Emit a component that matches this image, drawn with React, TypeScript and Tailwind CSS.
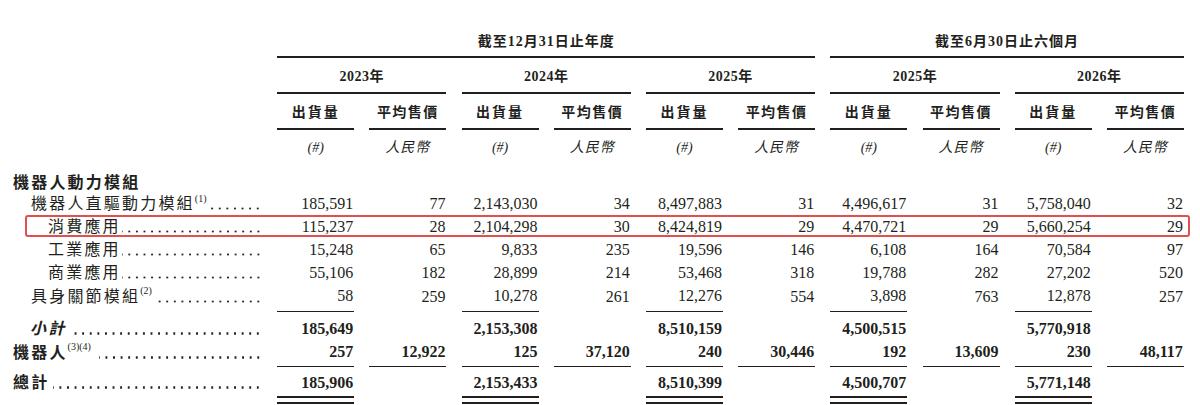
import React from "react";

const G = "grid grid-cols-[262px_repeat(10,77px)] gap-x-[15.2px]";
const LINE = "border-[#231f20]";

type Row = {
  label: string;
  sup?: string;
  indent: number;
  vals: string[];
};

const body: Row[] = [
  { label: "機器人直驅動力模組", sup: "(1)", indent: 31, vals: ["185,591", "77", "2,143,030", "34", "8,497,883", "31", "4,496,617", "31", "5,758,040", "32"] },
  { label: "消費應用", indent: 48, vals: ["115,237", "28", "2,104,298", "30", "8,424,819", "29", "4,470,721", "29", "5,660,254", "29"] },
  { label: "工業應用", indent: 48, vals: ["15,248", "65", "9,833", "235", "19,596", "146", "6,108", "164", "70,584", "97"] },
  { label: "商業應用", indent: 48, vals: ["55,106", "182", "28,899", "214", "53,468", "318", "19,788", "282", "27,202", "520"] },
];

function Label({
  text,
  sup,
  indent,
  bold,
  italic,
  gap = "ml-[1px]",
  cls = "",
}: {
  text: string;
  sup?: string;
  indent: number;
  bold?: boolean;
  italic?: boolean;
  gap?: string;
  cls?: string;
}) {
  return (
    <div
      className={
        "flex items-center whitespace-nowrap min-w-0 w-full " +
        (bold ? "font-bold " : "") +
        cls
      }
      style={{ paddingLeft: indent }}
    >
      <span className={"shrink-0 tracking-[2.2px] " + (italic ? "italic" : "")}>{text}</span>
      {sup ? (
        <span className="shrink-0 text-[10px] relative -top-[6px] font-normal tracking-normal">{sup}</span>
      ) : null}
      <span
        className={
          "flex-1 min-w-0 h-[12px] bg-repeat-x bg-right-bottom bg-[length:7.6px_3px] " +
          (bold
            ? "bg-[radial-gradient(circle,#231f20_1px,transparent_1.4px)] "
            : "bg-[radial-gradient(circle,#231f20_0.85px,transparent_1.25px)] ") +
          gap
        }
      />
    </div>
  );
}

export default function App() {
  const years = ["2023年", "2024年", "2025年", "2025年", "2026年"];
  return (
    <div className="w-[1200px] h-[405px] bg-white text-[#231f20] font-['Liberation_Serif','Noto_Sans_CJK_TC',serif] overflow-hidden">
      {/* Title row */}
      <div className={G + " pt-[27px]"}>
        <div />
        <div className={"col-span-6 h-[31px] border-b-2 " + LINE + " flex items-center justify-center font-bold text-[14px] tracking-[1px]"}>
          截至12月31日止年度
        </div>
        <div className={"col-span-4 h-[31px] border-b-2 " + LINE + " flex items-center justify-center font-bold text-[14px] tracking-[1px]"}>
          截至6月30日止六個月
        </div>
      </div>

      {/* Year row */}
      <div className={G}>
        <div />
        {years.map((y, i) => (
          <div
            key={i}
            className={"col-span-2 h-[36px] pt-[3px] border-b-2 " + LINE + " flex items-center justify-center font-bold text-[14px] tracking-[0.5px]"}
          >
            {y}
          </div>
        ))}
      </div>

      {/* Header row */}
      <div className={G}>
        <div />
        {years.map((_, i) => (
          <React.Fragment key={i}>
            <div className={"h-[36px] pt-[3px] border-b-2 " + LINE + " flex items-center justify-center font-bold text-[14px] tracking-[2px]"}>
              出貨量
            </div>
            <div className={"h-[36px] pt-[3px] border-b-2 " + LINE + " flex items-center justify-center font-bold text-[14px] tracking-[1.5px]"}>
              平均售價
            </div>
          </React.Fragment>
        ))}
      </div>

      {/* Units row */}
      <div className={G}>
        <div />
        {years.map((_, i) => (
          <React.Fragment key={i}>
            <div className="h-[30px] pt-[4px] flex items-center justify-center italic text-[14px]">(#)</div>
            <div className="h-[30px] pt-[4px] flex items-center justify-center italic text-[14px] tracking-[1px]">人民幣</div>
          </React.Fragment>
        ))}
      </div>

      <div className="h-[11px]" />

      {/* Section heading */}
      <div className={G + " h-[21px] text-[16px]"}>
        <div className="flex items-center font-bold pl-[13px] tracking-[2.2px] whitespace-nowrap">機器人動力模組</div>
      </div>

      {/* Body rows */}
      {body.map((r, ri) => (
        <div key={ri} className={G + " h-[23px] text-[16px] relative"}>
          <Label text={r.label} sup={r.sup} indent={r.indent} />
          {r.vals.map((v, i) => (
            <div key={i} className="flex items-center justify-end pr-[1px]">
              {v}
            </div>
          ))}
          {ri === 1 ? (
            <span className="absolute left-[25px] top-0 w-[1165px] h-[22px] border-[2.5px] border-[#e0504e] rounded-[3px]" />
          ) : null}
        </div>
      ))}

      {/* 具身關節模組 row */}
      <div className={G + " h-[27px] text-[16px]"}>
        <Label text="具身關節模組" sup="(2)" indent={31} gap="ml-[6px]" cls="pb-[3px]" />
        {["58", "259", "10,278", "261", "12,276", "554", "3,898", "763", "12,878", "257"].map((v, i) => (
          <div
            key={i}
            className={
              "flex items-center justify-end pr-[1px] pb-[3px] " +
              (i % 2 === 0 ? "border-b-[1.5px] " + LINE : "")
            }
          >
            {v}
          </div>
        ))}
      </div>

      {/* 小計 row */}
      <div className={G + " h-[29px] pt-[6px] text-[16px] font-bold"}>
        <Label text="小計" indent={30} bold italic gap="ml-[4px]" />
        {["185,649", "", "2,153,308", "", "8,510,159", "", "4,500,515", "", "5,770,918", ""].map((v, i) => (
          <div key={i} className="flex items-center justify-end pr-[1px]">
            {v}
          </div>
        ))}
      </div>

      {/* 機器人 row */}
      <div className={G + " h-[26px] text-[16px] font-bold"}>
        <Label text="機器人" sup="(3)(4)" indent={13} bold gap="ml-[8px]" cls="pb-[2px]" />
        {["257", "12,922", "125", "37,120", "240", "30,446", "192", "13,609", "230", "48,117"].map((v, i) => (
          <div key={i} className={"flex items-center justify-end pr-[1px] pb-[2px] border-b-[1.5px] " + LINE}>
            {v}
          </div>
        ))}
      </div>

      {/* 總計 row */}
      <div className={G + " text-[16px] font-bold"}>
        <Label text="總計" indent={13} bold gap="ml-[4px]" cls="h-[30px] pt-[3px]" />
        {["185,906", "", "2,153,433", "", "8,510,399", "", "4,500,707", "", "5,771,148", ""].map((v, i) => (
          <div key={i} className="flex flex-col">
            <div className="h-[30px] pt-[3px] flex items-center justify-end pr-[1px]">{v}</div>
            {v ? (
              <>
                <div className="h-[1.5px] bg-[#231f20]" />
                <div className="h-[4.5px]" />
                <div className="h-[1.5px] bg-[#231f20]" />
              </>
            ) : null}
          </div>
        ))}
      </div>
    </div>
  );
}
